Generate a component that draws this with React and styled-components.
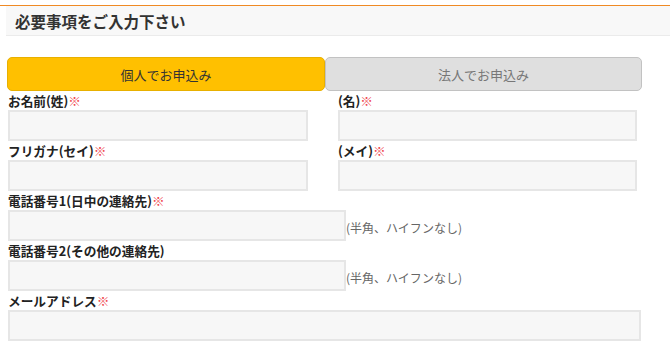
import React, { useState } from "react";
import styled, { createGlobalStyle } from "styled-components";

const GlobalStyle = createGlobalStyle`
  body {
    margin: 0;
    background: #fff;
    font-family: "Noto Sans CJK JP", "Noto Sans", sans-serif;
    color: #333;
  }
`;

const Page = styled.div`
  padding-top: 5px;
  width: 670px;
`;

const Section = styled.div`
  border-top: 1px solid #f08a24;
`;

const Heading = styled.h2`
  margin: 0 0 0 6px;
  height: 29px;
  padding-left: 9px;
  display: flex;
  align-items: center;
  background: #f8f8f8;
  border-bottom: 1px solid #ebebeb;
  font-size: 15.5px;
  font-weight: bold;
  color: #333;
`;

const Form = styled.form`
  padding: 21px 0 0 7px;
  width: 635px;
`;

const Tabs = styled.div`
  display: grid;
  grid-template-columns: 318px 317px;
  height: 34px;
`;

const Tab = styled.button`
  border: 1px solid ${(p) => (p.$active ? "#e8b000" : "#c2c2c2")};
  border-radius: 5px;
  background: ${(p) => (p.$active ? "#ffc000" : "#dfdfdf")};
  color: ${(p) => (p.$active ? "#333" : "#777")};
  font-family: inherit;
  font-size: 13px;
  cursor: pointer;
  padding: 0;
`;

const Row = styled.div`
  display: grid;
  grid-template-columns: 301px 299px;
  column-gap: 29px;
  padding-left: 1px;
`;

const Field = styled.div`
  display: flex;
  flex-direction: column;
`;

const Label = styled.label`
  height: 19px;
  line-height: 19px;
  font-size: 12.7px;
  font-weight: bold;
  color: #222;
  white-space: nowrap;
`;

const Mark = styled.span`
  color: #f0484f;
  font-weight: normal;
`;

const InputLine = styled.div`
  display: flex;
  align-items: center;
`;

const Input = styled.input`
  box-sizing: border-box;
  height: 31px;
  width: ${(p) => p.$width};
  border: 2px solid #e6e6e6;
  background: #f7f7f7;
  outline: none;
  margin: 0;
`;

const Note = styled.span`
  font-size: 12px;
  color: #666;
  margin-top: 4px;
`;

const Single = styled.div`
  display: flex;
  flex-direction: column;
  padding-left: 1px;
`;

export default function App() {
  const [type, setType] = useState("personal");

  return (
    <Page>
      <GlobalStyle />
      <Section>
        <Heading>必要事項をご入力下さい</Heading>
        <Form>
          <Tabs>
            <Tab type="button" $active={type === "personal"} onClick={() => setType("personal")}>
              個人でお申込み
            </Tab>
            <Tab type="button" $active={type === "corp"} onClick={() => setType("corp")}>
              法人でお申込み
            </Tab>
          </Tabs>

          <Row>
            <Field>
              <Label>お名前(姓)<Mark>※</Mark></Label>
              <Input $width="300px" />
            </Field>
            <Field>
              <Label>(名)<Mark>※</Mark></Label>
              <Input $width="299px" />
            </Field>
          </Row>

          <Row>
            <Field>
              <Label>フリガナ(セイ)<Mark>※</Mark></Label>
              <Input $width="300px" />
            </Field>
            <Field>
              <Label>(メイ)<Mark>※</Mark></Label>
              <Input $width="299px" />
            </Field>
          </Row>

          <Single>
            <Label>電話番号1(日中の連絡先)<Mark>※</Mark></Label>
            <InputLine>
              <Input $width="338px" />
              <Note>(半角、ハイフンなし)</Note>
            </InputLine>
          </Single>

          <Single>
            <Label>電話番号2(その他の連絡先)</Label>
            <InputLine>
              <Input $width="338px" />
              <Note>(半角、ハイフンなし)</Note>
            </InputLine>
          </Single>

          <Single>
            <Label>メールアドレス<Mark>※</Mark></Label>
            <Input $width="633px" />
          </Single>
        </Form>
      </Section>
    </Page>
  );
}
